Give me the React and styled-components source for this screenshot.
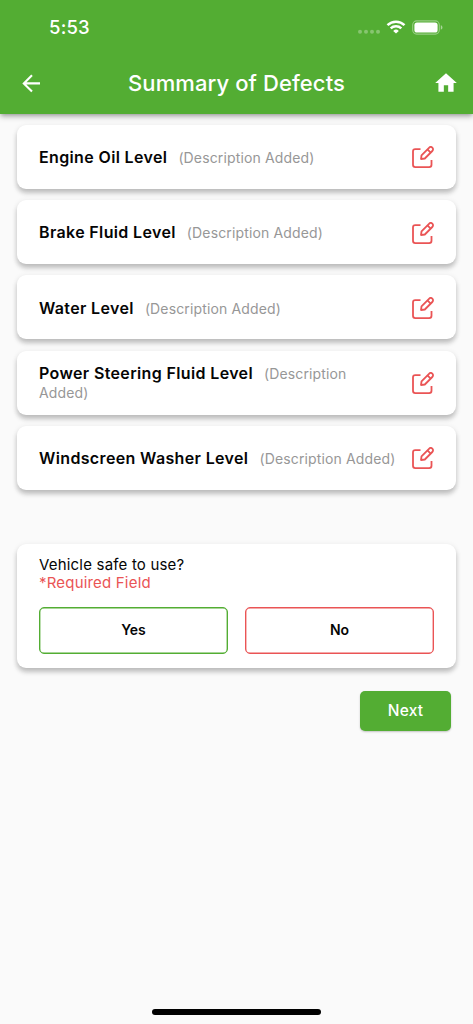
import React from "react";
import styled, { createGlobalStyle } from "styled-components";

const GlobalStyle = createGlobalStyle`
  * {
    box-sizing: border-box;
  }
  body {
    margin: 0;
    background: #fafafa;
    font-family: Inter, "Liberation Sans", sans-serif;
    color: #050505;
  }
`;

const Wrapper = styled.div`
  height: 1024px;
  display: flex;
  flex-direction: column;
  overflow: hidden;
`;

const Header = styled.header`
  height: 114px;
  flex: none;
  background: #53ad33;
  color: #fff;
  box-shadow: 0 2px 4px -1px rgba(0, 0, 0, 0.25), 0 3px 6px rgba(0, 0, 0, 0.2);
`;

const StatusBar = styled.div`
  height: 52px;
  padding: 2px 30px 0 49px;
  display: flex;
  align-items: center;
  justify-content: space-between;
`;

const Time = styled.span`
  font-size: 18.5px;
  font-weight: 500;
  letter-spacing: 0.2px;
`;

const StatusIcons = styled.div`
  display: flex;
  align-items: center;
`;

const TitleBar = styled.div`
  height: 61px;
  padding: 0 14px 0 19px;
  display: grid;
  grid-template-columns: 24px 1fr 26px;
  align-items: center;

  svg {
    display: block;
  }
`;

const Title = styled.h1`
  margin: 0;
  padding-right: 3px;
  font-size: 22px;
  font-weight: 500;
  line-height: 28px;
  letter-spacing: 0.1px;
  text-align: center;
`;

const Content = styled.main`
  flex: 1;
  padding: 11px 17px 0;
`;

const Card = styled.section`
  background: #fff;
  border-radius: 9px;
  box-shadow: 0 4px 5px rgba(0, 0, 0, 0.22), 0 1px 6px rgba(0, 0, 0, 0.07);
`;

const DefectList = styled.div`
  display: grid;
  row-gap: 11.2px;
`;

const DefectCard = styled(Card)`
  height: 64px;
  padding: 0.8px 22px 0;
  display: flex;
  align-items: center;
  justify-content: space-between;

  svg {
    flex: none;
  }
`;

const DefectText = styled.div`
  width: 360px;
  font-size: 16px;
  line-height: 18.5px;
`;

const DefectName = styled.span`
  margin-right: 11px;
  font-weight: 600;
  letter-spacing: 0.36px;
`;

const Description = styled.span`
  font-size: 14px;
  line-height: 14px;
  color: #979797;
  letter-spacing: 0.14px;
`;

const SafetyCard = styled(Card)`
  height: 124px;
  margin-top: 54px;
  padding: 12px 22px 14px;
`;

const Question = styled.div`
  font-size: 15px;
  line-height: 18.5px;
  letter-spacing: 0.19px;
`;

const Required = styled(Question)`
  color: #ea5455;
`;

const Options = styled.div`
  margin-top: 14px;
  display: grid;
  grid-template-columns: 1fr 1fr;
  column-gap: 17px;
`;

const Option = styled.button`
  height: 47px;
  padding: 0 0 2px;
  background: #fff;
  border: 1px solid ${props => props.$accent};
  border-radius: 5px;
  box-shadow: inset 0 0 0 0.4px ${props => props.$accent};
  font: 600 14px Inter, "Liberation Sans", sans-serif;
  color: #050505;
`;

const Actions = styled.div`
  margin-top: 23px;
  padding-right: 5px;
  display: flex;
  justify-content: flex-end;
`;

const NextButton = styled.button`
  width: 91px;
  height: 40px;
  padding: 0;
  border: 0;
  border-radius: 5px;
  background: #53ad33;
  color: #fff;
  font: 500 15.5px Inter, "Liberation Sans", sans-serif;
  letter-spacing: 0.2px;
  box-shadow: 0 1px 2px rgba(0, 0, 0, 0.22);
`;

const HomeIndicator = styled.div`
  width: 169px;
  height: 6px;
  flex: none;
  margin: 0 auto 9px;
  border-radius: 3px;
  background: #000;
`;

const SignalIcon = () => (
  <svg width="24" height="14" viewBox="0 0 24 14" fill="#fff" fillOpacity="0.3">
    <circle cx="3" cy="11.7" r="2" />
    <circle cx="9" cy="11.7" r="2" />
    <circle cx="15" cy="11.7" r="2" />
    <circle cx="21" cy="11.7" r="2" />
  </svg>
);

const Wifi = styled.svg`
  margin-left: 5px;
`;

const WifiIcon = () => (
  <Wifi width="20" height="14" viewBox="0 0 20 14">
    <g fill="none" stroke="#fff" strokeWidth="2.5">
      <path d="M1.5 5.1A12.2 12.2 0 0 1 18.5 5.1" />
      <path d="M4.7 8.3A7.7 7.7 0 0 1 15.3 8.3" />
    </g>
    <path d="M10 13.6L7.2 10.9A4 4 0 0 1 12.8 10.9Z" fill="#fff" />
  </Wifi>
);

const Battery = styled.svg`
  margin-left: 6px;
`;

const BatteryIcon = () => (
  <Battery width="31" height="15" viewBox="0 0 31 15">
    <rect x="0.7" y="0.9" width="26.6" height="13.2" rx="4" fill="none" stroke="#fff" strokeOpacity="0.4" strokeWidth="1.1" />
    <rect x="2.4" y="2.6" width="23.2" height="9.9" rx="2.6" fill="#fff" />
    <path d="M28.8 5.3C31 6 31 9 28.8 9.7Z" fill="#fff" fillOpacity="0.5" />
  </Battery>
);

const BackIcon = () => (
  <svg width="24" height="24" viewBox="0 0 24 24" fill="none" stroke="#fff" strokeWidth="2.1">
    <path d="M21 12.4H4.8M13 4.2L4.8 12.4L13 20.6" />
  </svg>
);

const HomeIcon = () => (
  <svg width="26" height="26" viewBox="0 0 24 24" fill="#fff">
    <path d="M10 20v-6h4v6h5v-8h3L12 3 2 12h3v8z" />
  </svg>
);

const EditIcon = () => (
  <svg width="22" height="22" viewBox="0 0 22 22" fill="none" stroke="#ea5455" strokeWidth="1.8" strokeLinejoin="round">
    <path d="M8.5 3.1H3.3C1.8 3.1 1 3.9 1 5.4V18.8C1 20.4 1.8 21.1 3.3 21.1H17.2C18.7 21.1 19.5 20.4 19.5 18.8V14" />
    <path d="M9 13L9.5 9.3L17 1.8C18 0.8 19.3 0.7 20.3 1.6C21.3 2.6 21.3 4 20.3 5L12.8 12.5Z" />
    <path d="M15.4 3.4L18.7 6.7" />
  </svg>
);

const defects = [
  "Engine Oil Level",
  "Brake Fluid Level",
  "Water Level",
  "Power Steering Fluid Level",
  "Windscreen Washer Level"
];

export default () => (
  <Wrapper>
    <GlobalStyle />
    <Header>
      <StatusBar>
        <Time>5:53</Time>
        <StatusIcons>
          <SignalIcon />
          <WifiIcon />
          <BatteryIcon />
        </StatusIcons>
      </StatusBar>
      <TitleBar>
        <BackIcon />
        <Title>Summary of Defects</Title>
        <HomeIcon />
      </TitleBar>
    </Header>
    <Content>
      <DefectList>
        {defects.map(name => (
          <DefectCard key={name}>
            <DefectText>
              <DefectName>{name}</DefectName>
              <Description>(Description Added)</Description>
            </DefectText>
            <EditIcon />
          </DefectCard>
        ))}
      </DefectList>
      <SafetyCard>
        <Question>Vehicle safe to use?</Question>
        <Required>*Required Field</Required>
        <Options>
          <Option $accent="#53ad33">Yes</Option>
          <Option $accent="#ea5455">No</Option>
        </Options>
      </SafetyCard>
      <Actions>
        <NextButton>Next</NextButton>
      </Actions>
    </Content>
    <HomeIndicator />
  </Wrapper>
);
